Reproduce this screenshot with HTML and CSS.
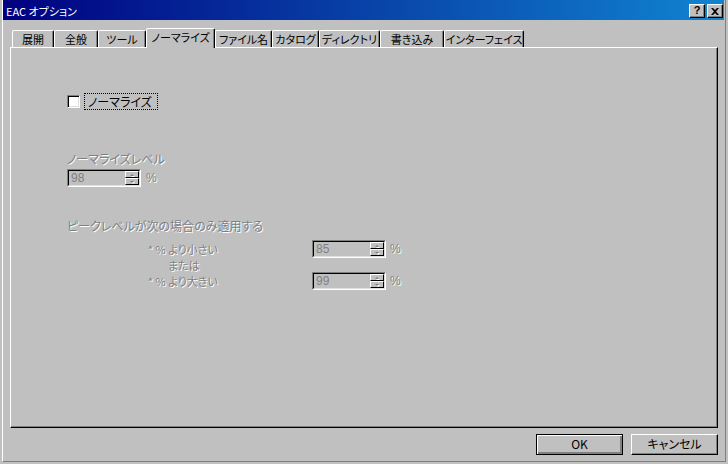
FILE: index.html
```html
<!DOCTYPE html>
<html lang="ja">
<head>
<meta charset="utf-8">
<title>EAC オプション</title>
<link rel="stylesheet" href="styles.css">
</head>
<body>
<div class="window">
  <div class="frame">
    <div class="titlebar">
      <span class="title">EAC オプション</span>
      <div class="title-btns">
        <div class="tbtn"><span class="help">?</span></div>
        <div class="tbtn">
          <svg width="8" height="7" viewBox="0 0 8 7"><path d="M0 0h2l2 2 2-2h2L5 3.5 8 7H6L4 5 2 7H0l3-3.5z" fill="#000"/></svg>
        </div>
      </div>
    </div>
    <div class="body">
      <div class="tabs">
        <div class="tab t1">展開</div>
        <div class="tab t2">全般</div>
        <div class="tab t3">ツール</div>
        <div class="tab t4 active">ノーマライズ</div>
        <div class="tab t5">ファイル名</div>
        <div class="tab t6">カタログ</div>
        <div class="tab t7">ディレクトリ</div>
        <div class="tab t8">書き込み</div>
        <div class="tab t9">インターフェイス</div>
      </div>
      <div class="panel">
        <div class="check-row">
          <span class="checkbox"></span>
          <span class="check-label">ノーマライズ</span>
        </div>
        <div class="dis label-level">ノーマライズレベル</div>
        <div class="spin-row">
          <div class="spin">
            <div class="spin-inner">
              <span class="spin-val">98</span>
              <div class="spin-btns">
                <div class="sbtn"><span class="arr up"></span></div>
                <div class="sbtn"><span class="arr down"></span></div>
              </div>
            </div>
          </div>
          <span class="dis pct">%</span>
        </div>
        <div class="dis label-peak">ピークレベルが次の場合のみ適用する</div>
        <div class="cond">
          <div class="cond-row">
            <span class="dis cond-text">* % より小さい</span>
            <div class="spin">
              <div class="spin-inner">
                <span class="spin-val">85</span>
                <div class="spin-btns">
                  <div class="sbtn"><span class="arr up"></span></div>
                  <div class="sbtn"><span class="arr down"></span></div>
                </div>
              </div>
            </div>
            <span class="dis pct2">%</span>
          </div>
          <div class="dis cond-or">または</div>
          <div class="cond-row">
            <span class="dis cond-text">* % より大きい</span>
            <div class="spin">
              <div class="spin-inner">
                <span class="spin-val">99</span>
                <div class="spin-btns">
                  <div class="sbtn"><span class="arr up"></span></div>
                  <div class="sbtn"><span class="arr down"></span></div>
                </div>
              </div>
            </div>
            <span class="dis pct2">%</span>
          </div>
        </div>
      </div>
      <div class="actions">
        <div class="btn default"><span class="btn-face">OK</span></div>
        <div class="btn"><span class="btn-face">キャンセル</span></div>
      </div>
    </div>
  </div>
</div>
</body>
</html>
```

FILE: styles.css
```css
html, body {
  margin: 0;
  padding: 0;
}
body {
  background: #c0c0c0;
  font-family: "Noto Sans CJK JP", "Noto Sans", sans-serif;
  font-size: 11px;
  font-feature-settings: "palt" 1;
  color: #000;
}
.window {
  width: 728px;
  height: 464px;
  box-sizing: border-box;
  padding: 0 2px 2px 2px;
  background: #c0c0c0;
  overflow: hidden;
}
.frame {
  height: 462px;
  box-sizing: border-box;
  border-left: 1px solid #fff;
  border-right: 1px solid #808080;
  border-bottom: 1px solid #808080;
  display: flex;
  flex-direction: column;
}
.titlebar {
  height: 20px;
  margin-right: 1px;
  background: linear-gradient(to right, #000080, #1084d0);
  display: flex;
  align-items: flex-start;
  justify-content: space-between;
}
.title {
  color: #fff;
  margin: 5px 0 0 3px;
  line-height: 13px;
  white-space: nowrap;
}
.title-btns {
  display: flex;
  gap: 2px;
  margin: 4px 1px 0 0;
}
.tbtn {
  width: 16px;
  height: 14px;
  box-sizing: border-box;
  background: #c0c0c0;
  border-top: 1px solid #fff;
  border-left: 1px solid #fff;
  border-right: 1px solid #000;
  border-bottom: 1px solid #000;
  box-shadow: inset -1px -1px 0 #808080;
  display: flex;
  align-items: center;
  justify-content: center;
}
.help {
  font-family: "Liberation Sans", Arial, sans-serif;
  font-weight: bold;
  font-size: 11px;
  line-height: 11px;
  margin-top: -1px;
}
.body {
  flex: 1;
  display: flex;
  flex-direction: column;
  padding-top: 8px;
}
.tabs {
  height: 19px;
  margin-left: 9px;
  display: flex;
  align-items: flex-end;
  position: relative;
  z-index: 2;
}
.tab {
  height: 17px;
  box-sizing: border-box;
  border-top: 1px solid #fff;
  border-left: 1px solid #fff;
  border-right: 1px solid #000;
  border-top-left-radius: 2px;
  border-top-right-radius: 2px;
  box-shadow: inset -1px 0 0 #808080;
  background: #c0c0c0;
  text-align: center;
  line-height: 14px;
  padding-top: 1px;
  white-space: nowrap;
  overflow: hidden;
  flex: none;
}
.tab.active {
  height: 20px;
  margin-bottom: -1px;
  padding-top: 1px;
}
.t1 { width: 42px; }
.t2 { width: 44px; }
.t3 { width: 48px; }
.t4 { width: 69px; }
.t5 { width: 57px; }
.t6 { width: 47px; }
.t7 { width: 61px; }
.t8 { width: 64px; }
.t9 { width: 80px; }
.panel {
  width: 708px;
  height: 381px;
  box-sizing: border-box;
  margin-left: 7px;
  border-top: 1px solid #fff;
  border-left: 1px solid #fff;
  border-right: 1px solid #000;
  border-bottom: 1px solid #000;
  box-shadow: inset -1px -1px 0 #808080;
  padding-left: 56px;
  display: flex;
  flex-direction: column;
  align-items: flex-start;
  position: relative;
  z-index: 1;
}
.check-row {
  margin-top: 45px;
  height: 17px;
  display: flex;
  align-items: center;
  gap: 4px;
}
.checkbox {
  width: 13px;
  height: 13px;
  box-sizing: border-box;
  background: #fff;
  border-top: 1px solid #808080;
  border-left: 1px solid #808080;
  border-right: 1px solid #fff;
  border-bottom: 1px solid #fff;
  box-shadow: inset 1px 1px 0 #000, inset -1px -1px 0 #dfdfdf;
}
.check-label {
  height: 17px;
  width: 74px;
  box-sizing: border-box;
  border: 1px dotted #000;
  padding: 0 0 0 3px;
  font-size: 12px;
  line-height: 15px;
  white-space: nowrap;
}
.dis {
  color: #808080;
  text-shadow: 1px 1px 0 #fff;
  white-space: nowrap;
}
.label-level {
  margin-top: 41px;
  font-size: 12px;
  line-height: 15px;
}
.spin-row {
  margin-top: 3px;
  display: flex;
  align-items: center;
}
.spin {
  width: 74px;
  height: 18px;
  box-sizing: border-box;
  border-top: 1px solid #808080;
  border-left: 1px solid #808080;
  border-right: 1px solid #fff;
  border-bottom: 1px solid #fff;
  display: flex;
  flex: none;
}
.spin-inner {
  flex: 1;
  box-sizing: border-box;
  border-top: 1px solid #000;
  border-left: 1px solid #000;
  border-right: 1px solid #dfdfdf;
  border-bottom: 1px solid #dfdfdf;
  display: flex;
  align-items: center;
  justify-content: space-between;
}
.spin-val {
  color: #808080;
  font-family: "Liberation Sans", Arial, sans-serif;
  font-size: 12px;
  padding-left: 2px;
  line-height: 14px;
}
.spin-btns {
  width: 14px;
  height: 100%;
  display: flex;
  flex-direction: column;
}
.sbtn {
  flex: 1;
  box-sizing: border-box;
  background: #c0c0c0;
  border-top: 1px solid #fff;
  border-left: 1px solid #fff;
  border-right: 1px solid #000;
  border-bottom: 1px solid #000;
  display: flex;
  align-items: center;
  justify-content: center;
}
.arr {
  width: 0;
  height: 0;
  border-left: 2px solid transparent;
  border-right: 2px solid transparent;
  filter: drop-shadow(1px 1px 0 #fff);
}
.arr.up { border-bottom: 2px solid #808080; }
.arr.down { border-top: 2px solid #808080; }
.pct {
  margin-left: 5px;
  font-family: "Liberation Sans", Arial, sans-serif;
  font-size: 12px;
}
.label-peak {
  margin-top: 31px;
  font-size: 12px;
  line-height: 15px;
}
.cond {
  margin-top: 7px;
  margin-left: 81px;
  display: flex;
  flex-direction: column;
}
.cond-row {
  display: flex;
  align-items: center;
  height: 18px;
}
.cond-text {
  width: 164px;
  flex: none;
  line-height: 12px;
}
.cond-or {
  height: 14px;
  line-height: 14px;
  padding-left: 20px;
}
.pct2 {
  margin-left: 4px;
  font-family: "Liberation Sans", Arial, sans-serif;
  font-size: 12px;
  line-height: 12px;
}
.actions {
  margin-top: 6px;
  margin-right: 7px;
  display: flex;
  justify-content: flex-end;
  gap: 8px;
}
.btn {
  width: 87px;
  height: 21px;
  box-sizing: border-box;
  background: #c0c0c0;
  border-top: 1px solid #fff;
  border-left: 1px solid #fff;
  border-right: 1px solid #000;
  border-bottom: 1px solid #000;
  box-shadow: inset -1px -1px 0 #808080;
  display: flex;
}
.btn.default {
  border: 1px solid #000;
  box-shadow: inset 1px 1px 0 #fff, inset -2px -2px 0 #808080;
}
.btn-face {
  flex: 1;
  text-align: center;
  line-height: 18px;
  white-space: nowrap;
  font-size: 12px;
}
```
